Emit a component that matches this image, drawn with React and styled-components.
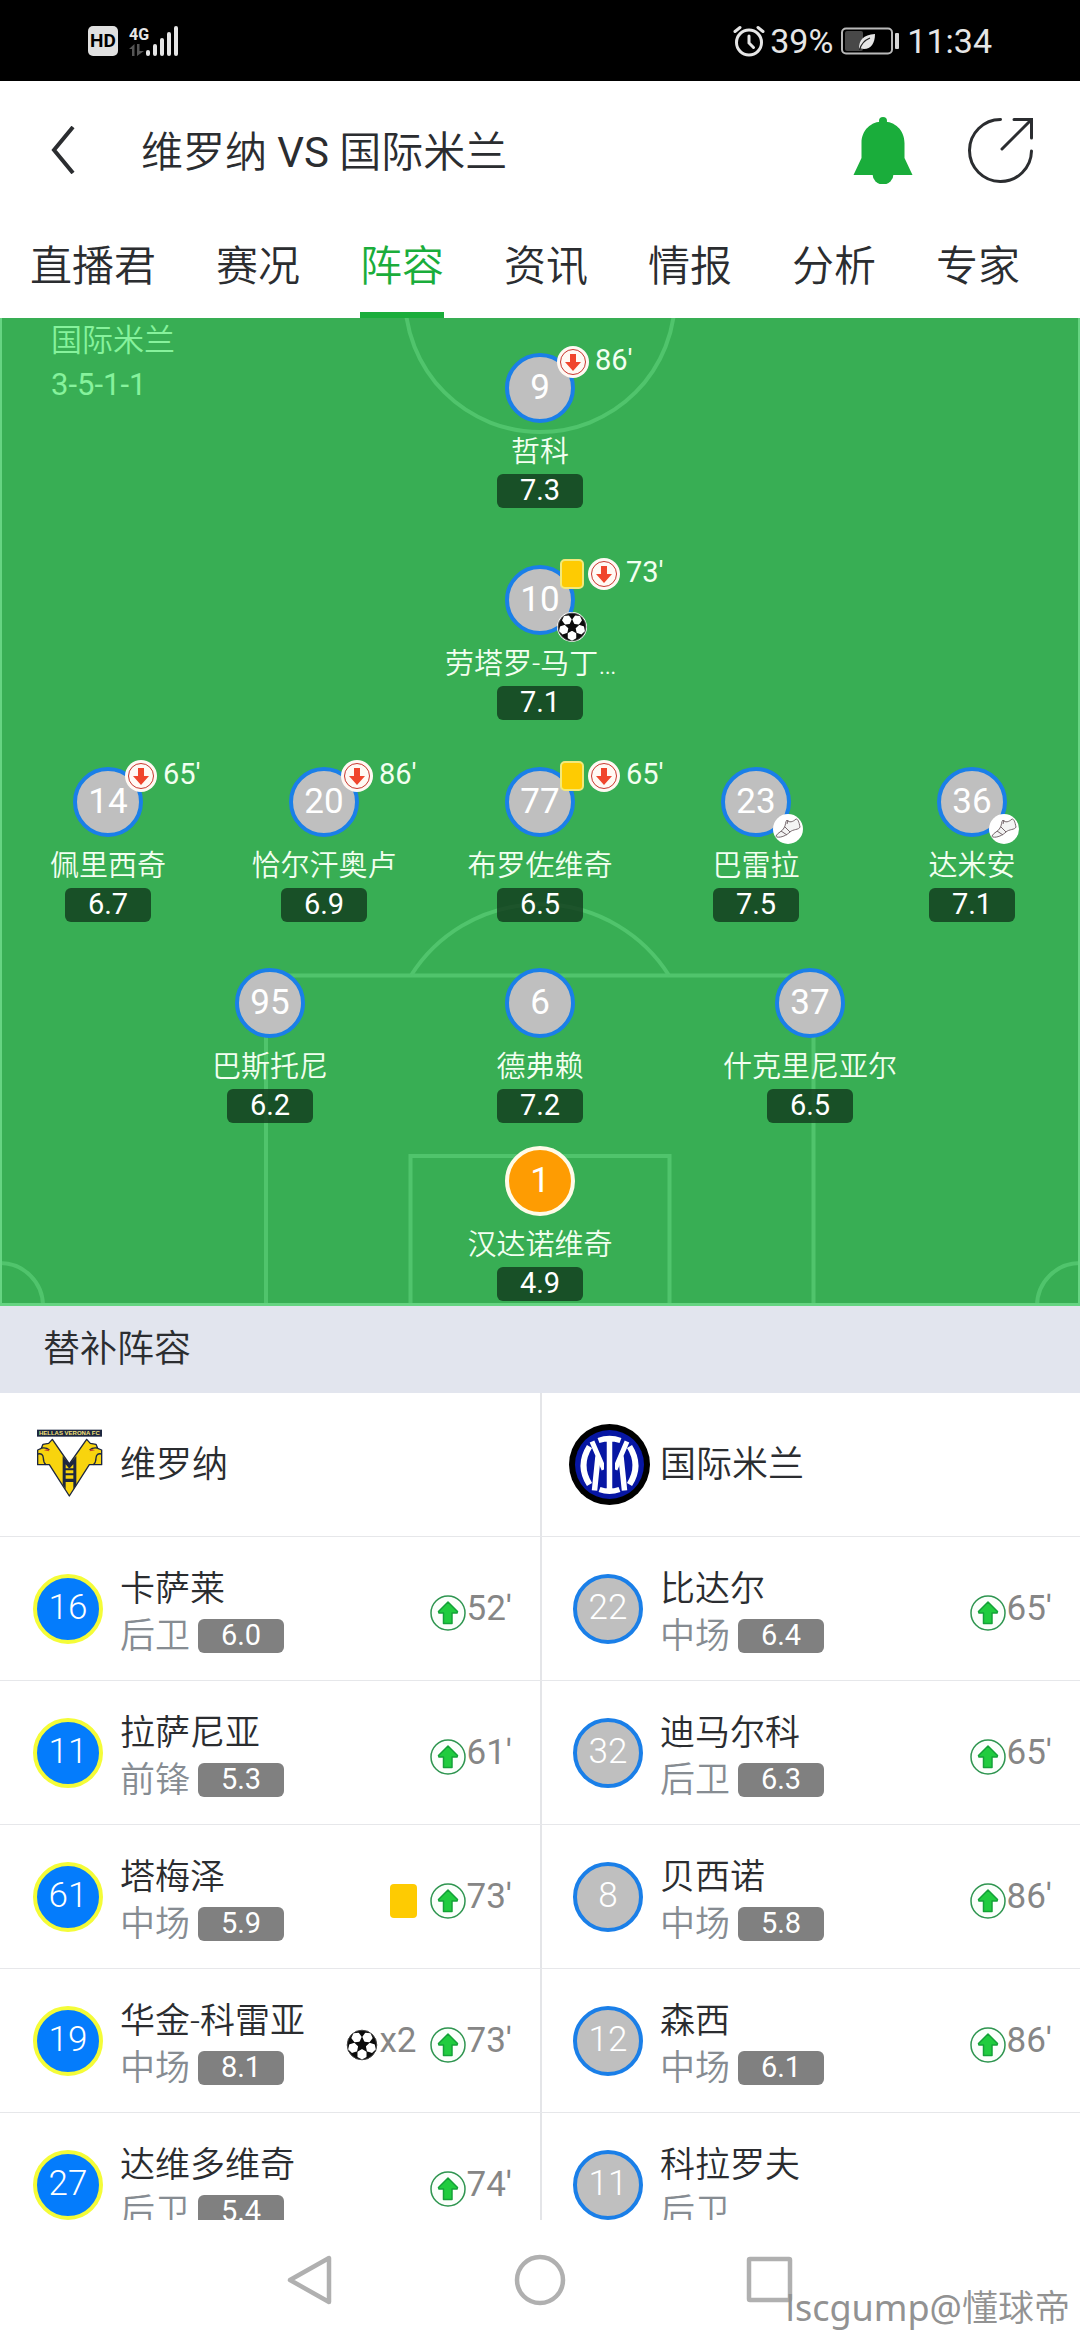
import React from "react";
import styled, { createGlobalStyle } from "styled-components";

const GlobalStyle = createGlobalStyle`
  *, *::before, *::after { box-sizing: border-box; }
  body {
    margin: 0;
    background: #fff;
    color: #2b2d30;
    font-family: Roboto, "Noto Sans CJK SC", sans-serif;
  }
  h1, h2, h3, p, ul { margin: 0; padding: 0; }
  ul { list-style: none; }
  button {
    margin: 0;
    padding: 0;
    border: 0;
    background: none;
    color: inherit;
    font: inherit;
    cursor: pointer;
  }
  svg { display: block; flex: none; }
`;

/* ---------- layout ---------- */

const Screen = styled.div`
  position: relative;
  display: flex;
  flex-direction: column;
  height: 100vh;
  overflow: hidden;
`;

const StatusBar = styled.div`
  flex: none;
  display: flex;
  align-items: center;
  justify-content: space-between;
  height: 81px;
  padding: 0 88px;
  background: #000;
  color: #e6e6e6;
  font-size: 34px;
  line-height: 40px;
`;

const StatusGroup = styled.div`
  display: flex;
  align-items: center;
  gap: ${(p) => p.$gap}px;
`;

const HdTag = styled.span`
  width: 30px;
  height: 30px;
  border-radius: 5px;
  background: #e0e0e0;
  color: #000;
  font-size: 19px;
  font-weight: 700;
  line-height: 30px;
  text-align: center;
`;

const Network = styled.div`
  width: 17px;
  display: flex;
  flex-direction: column;
  font-size: 16px;
  font-weight: 700;
  line-height: 18px;
`;

const TopBar = styled.header`
  flex: none;
  display: flex;
  align-items: center;
  height: 138px;
  padding: 0 46px 0 36px;
`;

const IconButton = styled.button`
  display: flex;
  align-items: center;
  justify-content: center;
  width: ${(p) => p.$width}px;
  height: 72px;
`;

const Title = styled.h1`
  flex: 1;
  padding: 5px 0 0 51px;
  font-size: 42px;
  font-weight: 350;
  line-height: 60px;
`;

const Latin = styled.span`
  font-weight: 400;
`;

const Actions = styled.div`
  display: flex;
  gap: 52px;
`;

const Tabs = styled.nav`
  flex: none;
  display: flex;
  gap: 60px;
  padding: 0 30px;
`;

const Tab = styled.button`
  padding-top: 3px;
  border-bottom: 6px solid ${(p) => (p.$active ? "#1aad3b" : "transparent")};
  color: ${(p) => (p.$active ? "#1aad3b" : "inherit")};
  font-size: 42px;
  font-weight: 350;
  line-height: 90px;
  white-space: nowrap;
`;

const Content = styled.main`
  flex: 1;
  min-height: 0;
  overflow-y: auto;
  scrollbar-width: none;
`;

/* ---------- pitch ---------- */

const Pitch = styled.section`
  position: relative;
  padding: 35px 0 5px;
  background: #38ae54;
  color: #f2fff0;
`;

const Markings = styled.svg`
  position: absolute;
  inset: 0;
  width: 100%;
  height: 100%;
`;

const TeamLabel = styled.div`
  position: absolute;
  top: 1px;
  left: 51px;
  color: #86f29c;
  font-size: 31px;
  font-weight: 350;
  line-height: 44px;
`;

const Line = styled.div`
  position: relative;
  display: flex;
  padding: 0 ${(p) => (p.$narrow ? "12.5%" : "0")};
  margin-bottom: ${(p) => p.$space}px;
`;

const Player = styled.div`
  flex: 1 1 0;
  min-width: 0;
  display: flex;
  flex-direction: column;
  align-items: center;
`;

const Shirt = styled.div`
  position: relative;
  flex: none;
  width: 70px;
  height: 70px;
  border: 4px solid ${(p) => p.$ring};
  border-radius: 50%;
  background: ${(p) => p.$fill};
  color: #fff;
  font-size: 35px;
  font-weight: ${(p) => (p.$light ? 300 : 400)};
  line-height: ${(p) => (p.$light ? 60 : 62)}px;
  text-align: center;
`;

const TopBadges = styled.div`
  position: absolute;
  top: -11px;
  left: 48px;
  display: flex;
  align-items: center;
  gap: 4px;
`;

const BottomBadge = styled.div`
  position: absolute;
  top: 43px;
  left: 48px;
`;

const OffTime = styled.span`
  align-self: flex-start;
  padding-left: 2px;
  color: #f2fff0;
  font-size: 29px;
  font-weight: 400;
  line-height: 28px;
`;

const PlayerName = styled.span`
  max-width: 190px;
  padding-top: 7px;
  overflow: hidden;
  font-size: 29px;
  font-weight: 350;
  line-height: 44px;
  white-space: nowrap;
  text-overflow: ellipsis;
`;

const Rating = styled.span`
  width: 86px;
  height: 34px;
  border-radius: 6px;
  background: ${(p) => (p.$muted ? "#808080" : "rgba(16, 56, 28, 0.8)")};
  color: #fff;
  font-size: 29px;
  font-weight: 400;
  line-height: 32px;
  text-align: center;
`;

/* ---------- substitutes ---------- */

const SectionTitle = styled.h2`
  padding-left: 43px;
  background: #e2e5ee;
  font-size: 37px;
  font-weight: 350;
  line-height: 87px;
`;

const Bench = styled.div`
  display: grid;
  grid-template-columns: 1fr 1fr;
`;

const Side = styled.section`
  box-shadow: ${(p) => (p.$divided ? "inset 2px 0 #e4e5e8" : "none")};
`;

const TeamRow = styled.h3`
  display: flex;
  align-items: center;
  gap: 10px;
  height: 144px;
  padding-left: 29px;
  border-bottom: 1px solid #e6e7ea;
  font-size: 36px;
  font-weight: 350;
  line-height: 54px;
`;

const SubRow = styled.li`
  display: flex;
  align-items: center;
  height: 144px;
  padding: 0 28px 0 33px;
  border-bottom: 1px solid #e6e7ea;
`;

const SubInfo = styled.div`
  flex: 1;
  min-width: 0;
  padding: 8px 0 0 17px;
  font-size: 35px;
  font-weight: 350;
  line-height: 47px;
  white-space: nowrap;
`;

const Role = styled.div`
  display: flex;
  align-items: center;
  gap: 8px;
  color: #868c92;
`;

const Events = styled.div`
  display: flex;
  align-items: flex-end;
  gap: 13px;
  color: #868686;
  font-size: 35px;
  line-height: 44px;
`;

const Event = styled.span`
  display: flex;
  align-items: flex-end;
  gap: 1px;
`;

/* ---------- bottom ---------- */

const SystemNav = styled.nav`
  flex: none;
  display: flex;
  align-items: center;
  justify-content: center;
  gap: 170px;
  height: 120px;
`;

const Watermark = styled.div`
  position: absolute;
  right: 10px;
  bottom: 8px;
  color: #929292;
  font-family: "Noto Sans", "Noto Sans CJK SC", sans-serif;
  font-size: 36px;
  font-weight: 350;
  line-height: 48px;
`;

/* ---------- icons ---------- */

const AlarmIcon = () => (
  <svg width="32" height="32" viewBox="0 0 32 32" fill="none" stroke="#e6e6e6" strokeWidth="3" strokeLinecap="round">
    <circle cx="16" cy="17.5" r="12.5" />
    <path d="M16 11v7l4.5 4.5" />
    <path d="M2 6.500 7 2.500M30 6.500 25 2.500" />
  </svg>
);

const BatteryIcon = () => (
  <svg width="58" height="28" viewBox="0 0 58 28">
    <rect x="1" y="1.500" width="50" height="25" rx="4" fill="none" stroke="#b9b9b9" strokeWidth="2" />
    <rect x="4" y="4" width="18" height="20" rx="2" fill="#484848" />
    <path d="M18 22c0-9 4-14 16-15 0 9-4 15-11 15-2 0-3-1-4-1z" fill="#e6e6e6" />
    <path d="M18.500 23C20 17 24 13 29 11" fill="none" stroke="#222" strokeWidth="1.200" />
    <rect x="54" y="6" width="4" height="16" rx="1" fill="#d6d6d6" />
  </svg>
);

const DataArrows = () => (
  <svg width="15" height="12" viewBox="0 0 15 12" fill="#555">
    <path d="M0 5 5.500 0v12H3V5zM8 0h2.500v7H15l-7 5z" />
  </svg>
);

const SignalIcon = () => (
  <svg width="33" height="31" viewBox="0 0 33 31" fill="#e6e6e6">
    {[6, 12, 18, 24, 30].map((h, i) => (
      <rect key={h} x={i * 7} y={31 - h} width="4" height={h} rx="2" />
    ))}
  </svg>
);

const BackIcon = () => (
  <svg width="24" height="48" viewBox="0 0 24 48" fill="none" stroke="#2b2d30" strokeWidth="4">
    <path d="M22 1 3 24l19 23" />
  </svg>
);

const BellIcon = () => (
  <svg width="60" height="67" viewBox="0 0 60 67" fill="#1aad3b">
    <circle cx="30" cy="4" r="4" />
    <path d="M8.500 26C8.500 13 18 4.500 30 4.500S51.500 13 51.500 26v15L59.500 58H.5L8.500 41z" />
    <path d="M19.500 57a10.500 10.500 0 0 0 21 0z" />
  </svg>
);

const ShareIcon = () => (
  <svg width="66" height="66" viewBox="0 0 66 66" fill="none" stroke="#2b2d30" strokeWidth="3" strokeLinecap="round">
    <path d="M32.500 2.500a31 31 0 1 0 31 31.500" />
    <path d="M34 32 63 3M46 2.500h17.500v18.500" strokeLinejoin="miter" />
  </svg>
);

const OffIcon = () => (
  <svg width="32" height="32" viewBox="0 0 32 32">
    <circle cx="16" cy="16" r="16" fill="#fff9f4" />
    <circle cx="16" cy="16" r="12.500" fill="none" stroke="#c8372f" strokeWidth="1" />
    <path d="M13 8h6v8h5l-8 9-8-9h5z" fill="#f0452c" />
  </svg>
);

const OnIcon = () => (
  <svg width="36" height="36" viewBox="0 0 36 36">
    <circle cx="18" cy="18" r="17" fill="#fbfffb" stroke="#2f9550" strokeWidth="1.500" />
    <path d="M18 7 27.500 16.500 27 18h-5v10.500h-8.500V18H9l-.5-1.500z" fill="#21cc3f" stroke="#14a238" strokeWidth="1.500" strokeLinejoin="round" />
  </svg>
);

const CardIcon = ({ outlined }) =>
  outlined ? (
    <svg width="27" height="30" viewBox="-3 0 27 30">
      <rect x="1" y="1" width="22" height="28" rx="4" fill="#fecb02" stroke="#f3e87a" strokeWidth="2" />
    </svg>
  ) : (
    <svg width="27" height="36" viewBox="0 0 27 36">
      <rect y="1" width="27" height="34" rx="4" fill="#fecb02" />
    </svg>
  );

const hexagon = (cx, cy, r, turn) =>
  [0, 1, 2, 3, 4, 5]
    .map((i) => {
      const a = ((turn + i * 60) * Math.PI) / 180;
      return `${cx + r * Math.cos(a)},${cy + r * Math.sin(a)}`;
    })
    .join(" ");

const BallIcon = ({ size, height }) => (
  <svg width={size} height={height || size} viewBox="0 0 32 32">
    <circle cx="16" cy="16" r="16" fill="#fff" />
    <circle cx="16" cy="16" r="14.800" fill="#0b0b0b" stroke="#444" strokeWidth="1" />
    {[90, 162, 234, 306, 18].map((deg) => {
      const a = (deg * Math.PI) / 180;
      return (
        <polygon
          key={deg}
          points={hexagon(16 + 9.3 * Math.cos(a), 16 + 9.3 * Math.sin(a), 4.3, deg)}
          fill="#fff"
          stroke="#fff"
          strokeWidth="1.600"
          strokeLinejoin="round"
        />
      );
    })}
  </svg>
);

const BootIcon = () => (
  <svg width="30" height="30" viewBox="0 0 30 30">
    <circle cx="15" cy="15" r="15" fill="#fff" />
    <path
      d="M3 22c2-4 6-4 8-8 2-3 1-6 3-8 2 3 6 2 9-1 2 0 3 3 4 8-1 3-7 2-10 5-3 3-9 6-13 5-1 0-1-1-1-1zM8 17l6 4M12 13l5 5M15 6l-1 4"
      fill="#f4f4f4"
      stroke="#75686c"
      strokeWidth="1"
      strokeLinejoin="round"
    />
  </svg>
);

const CrestLabel = styled.text`
  font-family: "Liberation Sans", sans-serif;
  font-size: 18px;
  font-weight: 700;
  fill: #f3e27a;
`;

const VeronaCrest = () => (
  <svg width="81" height="81" viewBox="27 40 243 243" role="img" aria-label="维罗纳">
    <rect x="51" y="57" width="195" height="21" fill="#1d2740" />
    <CrestLabel x="148" y="74" textAnchor="middle">HELLAS VERONA FC</CrestLabel>
    <path
      d="M97 86 86 98 69 101 64 113 53 118V162H88L148 256 208 162H245V118L233 113 228 101 211 98 200 86 148 160z"
      fill="#f8d40e"
      stroke="#1d2740"
      strokeWidth="4"
      strokeLinejoin="round"
    />
    <path d="M128 136 148 160 169 136V222L160 236V214H137V236L128 222z" fill="#1d2740" />
    <path d="M137 161 148 174 160 161v12h-23zM137 179h23v9h-23zM137 194h23v10h-23z" fill="#f8d40e" />
    <path d="M53 130q16-4 17 12 0 14 8 20M245 130q-16-4-17 12 0 14-8 20M66 112q14-2 22 6M231 112q-14-2-22 6" fill="none" stroke="#1d2740" strokeWidth="4" />
    <path d="M72 119l12-5 4 8zM225 119l-12-5-4 8z" fill="#c4402a" />
  </svg>
);

const InterCrest = () => (
  <svg width="81" height="81" viewBox="-40.5 -40.5 81 81" role="img" aria-label="国际米兰">
    <circle r="40.500" fill="#000" />
    <circle r="34.500" fill="#0716a3" />
    <g fill="none" stroke="#fff" strokeWidth="6">
      <path d="M-20-18Q-32 1-20 20M20-18Q32 1 20 20" />
      <path d="M-17.500-23-5.500 5M17.500-23 5.500 5" strokeWidth="5" />
      <path d="M-11.500-8-15 26M11.500-8 15 26" strokeWidth="5.500" />
      <path d="M0-27V27" stroke="#0716a3" strokeWidth="11" />
      <path d="M0-27V27M-11-24Q0-28 11-24M-10 25Q0 28.500 10 25" strokeWidth="5.500" />
    </g>
  </svg>
);

const NavIcon = ({ children }) => (
  <svg width="54" height="54" viewBox="0 0 54 54" fill="none" stroke="#b0b0b0" strokeWidth="4.500" strokeLinejoin="round">
    {children}
  </svg>
);

/* ---------- data ---------- */

const tabs = ["直播君", "赛况", "阵容", "资讯", "情报", "分析", "专家"];

const formation = [
  { space: 57, players: [{ no: 9, name: "哲科", rating: "7.3", off: "86'" }] },
  { space: 47, players: [{ no: 10, name: "劳塔罗-马丁内斯", rating: "7.1", off: "73'", card: true, badge: "goal" }] },
  {
    space: 46,
    players: [
      { no: 14, name: "佩里西奇", rating: "6.7", off: "65'" },
      { no: 20, name: "恰尔汗奥卢", rating: "6.9", off: "86'" },
      { no: 77, name: "布罗佐维奇", rating: "6.5", off: "65'", card: true },
      { no: 23, name: "巴雷拉", rating: "7.5", badge: "assist" },
      { no: 36, name: "达米安", rating: "7.1", badge: "assist" },
    ],
  },
  {
    space: 23,
    narrow: true,
    players: [
      { no: 95, name: "巴斯托尼", rating: "6.2" },
      { no: 6, name: "德弗赖", rating: "7.2" },
      { no: 37, name: "什克里尼亚尔", rating: "6.5" },
    ],
  },
  { space: 0, players: [{ no: 1, name: "汉达诺维奇", rating: "4.9", keeper: true }] },
];

const bench = [
  {
    team: "维罗纳",
    crest: <VeronaCrest />,
    ring: "#f4fc38",
    fill: "#047cfc",
    players: [
      { no: 16, name: "卡萨莱", role: "后卫", rating: "6.0", on: "52'" },
      { no: 11, name: "拉萨尼亚", role: "前锋", rating: "5.3", on: "61'" },
      { no: 61, name: "塔梅泽", role: "中场", rating: "5.9", on: "73'", card: true },
      { no: 19, name: "华金-科雷亚", role: "中场", rating: "8.1", on: "73'", goals: "x2" },
      { no: 27, name: "达维多维奇", role: "后卫", rating: "5.4", on: "74'" },
    ],
  },
  {
    team: "国际米兰",
    crest: <InterCrest />,
    ring: "#1a7fe8",
    fill: "#bfbfbf",
    players: [
      { no: 22, name: "比达尔", role: "中场", rating: "6.4", on: "65'" },
      { no: 32, name: "迪马尔科", role: "后卫", rating: "6.3", on: "65'" },
      { no: 8, name: "贝西诺", role: "中场", rating: "5.8", on: "86'" },
      { no: 12, name: "森西", role: "中场", rating: "6.1", on: "86'" },
      { no: 11, name: "科拉罗夫", role: "后卫" },
    ],
  },
];

/* ---------- composed parts ---------- */

function PitchPlayer({ player }) {
  return (
    <Player>
      <Shirt $ring={player.keeper ? "#fffbe8" : "#1a7fe8"} $fill={player.keeper ? "#fe9c02" : "#bfbfbf"}>
        {player.no}
        {player.off && (
          <TopBadges>
            {player.card && <CardIcon outlined />}
            <OffIcon />
            <OffTime>{player.off}</OffTime>
          </TopBadges>
        )}
        {player.badge && (
          <BottomBadge>{player.badge === "goal" ? <BallIcon size={30} /> : <BootIcon />}</BottomBadge>
        )}
      </Shirt>
      <PlayerName>{player.name}</PlayerName>
      <Rating>{player.rating}</Rating>
    </Player>
  );
}

function Substitute({ player, ring, fill }) {
  return (
    <SubRow>
      <Shirt $ring={ring} $fill={fill} $light>{player.no}</Shirt>
      <SubInfo>
        <p>{player.name}</p>
        <Role>
          {player.role}
          {player.rating && <Rating $muted>{player.rating}</Rating>}
        </Role>
      </SubInfo>
      <Events>
        {player.card && <Event><CardIcon /></Event>}
        {player.goals && <Event><BallIcon size={32} height={36} />{player.goals}</Event>}
        {player.on && <Event><OnIcon />{player.on}</Event>}
      </Events>
    </SubRow>
  );
}

export default function App() {
  return (
    <Screen>
      <GlobalStyle />
      <StatusBar>
        <StatusGroup $gap={11}>
          <HdTag>HD</HdTag>
          <StatusGroup $gap={0}>
            <Network>
              4G
              <DataArrows />
            </Network>
            <SignalIcon />
          </StatusGroup>
        </StatusGroup>
        <StatusGroup $gap={8}>
          <StatusGroup $gap={5}>
            <AlarmIcon />
            39%
          </StatusGroup>
          <BatteryIcon />
          11:34
        </StatusGroup>
      </StatusBar>

      <TopBar>
        <IconButton $width={54} aria-label="返回"><BackIcon /></IconButton>
        <Title>维罗纳 <Latin>VS</Latin> 国际米兰</Title>
        <Actions>
          <IconButton $width={66} aria-label="提醒"><BellIcon /></IconButton>
          <IconButton $width={66} aria-label="分享"><ShareIcon /></IconButton>
        </Actions>
      </TopBar>

      <Tabs>
        {tabs.map((tab) => (
          <Tab key={tab} $active={tab === "阵容"}>{tab}</Tab>
        ))}
      </Tabs>

      <Content>
        <Pitch>
          <Markings viewBox="0 0 1080 988" preserveAspectRatio="none" fill="none" stroke="#50c46c" strokeWidth="4" aria-hidden="true">
            <circle cx="540" cy="-21" r="135" />
            <path d="M266 988V657.500H813.500V988" />
            <path d="M410.500 988V838H669.500V988" />
            <path d="M411 657.500A152.500 152.500 0 0 1 669 657.500" />
            <path d="M0 945A43 43 0 0 1 43 988M1080 945A43 43 0 0 0 1037 988" />
            <path d="M0 0V987H1080V0" stroke="#66d482" />
          </Markings>
          <TeamLabel>
            <p>国际米兰</p>
            <p><Latin>3-5-1-1</Latin></p>
          </TeamLabel>
          {formation.map((line) => (
            <Line key={line.players[0].no} $space={line.space} $narrow={line.narrow}>
              {line.players.map((player) => (
                <PitchPlayer key={player.no} player={player} />
              ))}
            </Line>
          ))}
        </Pitch>

        <SectionTitle>替补阵容</SectionTitle>
        <Bench>
          {bench.map((side, i) => (
            <Side key={side.team} $divided={i > 0}>
              <TeamRow>
                {side.crest}
                {side.team}
              </TeamRow>
              <ul>
                {side.players.map((player) => (
                  <Substitute key={player.no} player={player} ring={side.ring} fill={side.fill} />
                ))}
              </ul>
            </Side>
          ))}
        </Bench>
      </Content>

      <SystemNav>
        <IconButton $width={60} aria-label="后退">
          <NavIcon><path d="M46 5v44L7 27z" /></NavIcon>
        </IconButton>
        <IconButton $width={60} aria-label="主屏幕">
          <NavIcon><circle cx="27" cy="27" r="23" /></NavIcon>
        </IconButton>
        <IconButton $width={60} aria-label="最近任务">
          <NavIcon><rect x="6" y="6" width="41" height="41" rx="1" /></NavIcon>
        </IconButton>
      </SystemNav>
      <Watermark><Latin>lscgump@</Latin>懂球帝</Watermark>
    </Screen>
  );
}
